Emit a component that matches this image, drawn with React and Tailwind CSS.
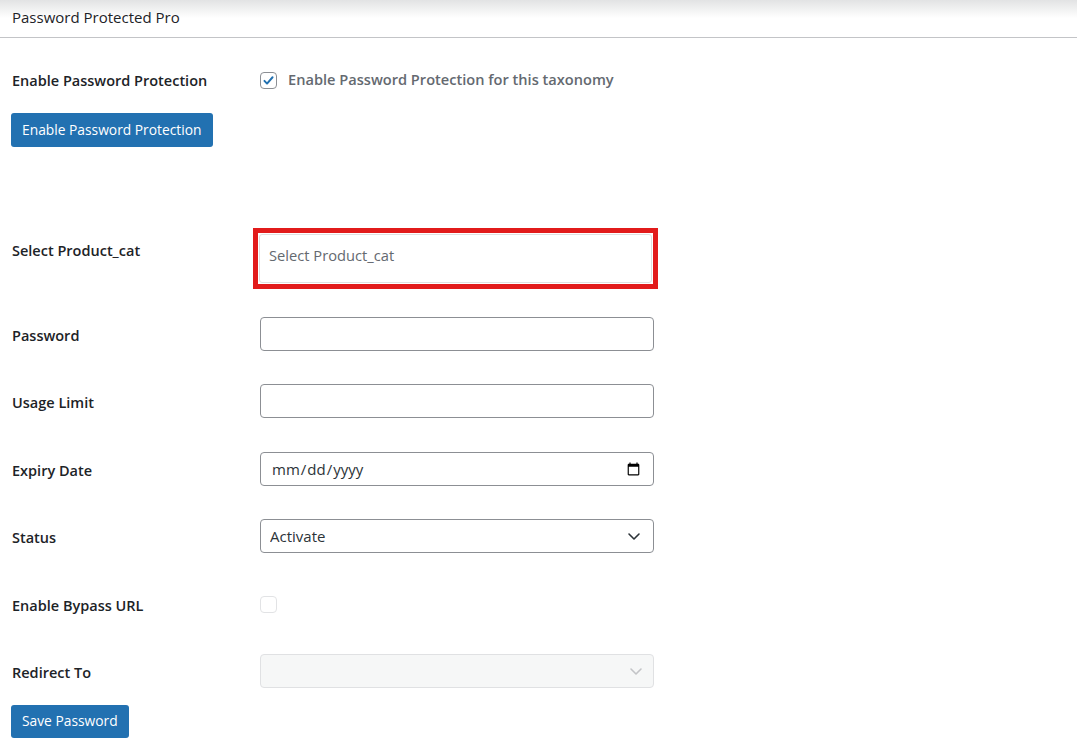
import { useState } from 'react';

const font = { fontFamily: '"Open Sans", "Noto Sans", "Liberation Sans", sans-serif' };

function Chevron({ className }) {
  return (
    <svg className={className} width="16" height="16" viewBox="0 0 16 16" fill="none" stroke="currentColor" strokeWidth="1.6" strokeLinecap="round" strokeLinejoin="round">
      <path d="M3 6l5 5 5-5" />
    </svg>
  );
}

function Row({ label, children, className = '' }) {
  return (
    <div className={`flex items-center h-[34px] ${className}`}>
      <div className="w-[248px] shrink-0 pt-[3px] text-[14.5px] font-semibold text-[#1d2327]">{label}</div>
      {children}
    </div>
  );
}

export default function App() {
  const [enabled, setEnabled] = useState(true);
  const [bypass, setBypass] = useState(false);

  return (
    <div className="min-h-[755px] w-full bg-white" style={font}>
      {/* header bar */}
      <div className="h-[38px] flex items-center pl-3 border-b border-[#c3c4c7] bg-[linear-gradient(to_bottom,#e2e3e4,#ffffff_18px)]">
        <span className="text-[15px] text-[#1d2327] -mt-[2px]">Password Protected Pro</span>
      </div>

      <div className="pl-3">
        {/* enable protection */}
        <div className="flex items-center h-[20px] mt-[32px]">
          <div className="w-[248px] shrink-0 pt-px text-[14.5px] font-semibold text-[#1d2327]">Enable Password Protection</div>
          <button
            onClick={() => setEnabled(!enabled)}
            className="w-[17px] h-[17px] rounded-[4px] border border-[#8c8f94] bg-white flex items-center justify-center"
          >
            {enabled && (
              <svg width="13" height="13" viewBox="0 0 16 16" fill="none" stroke="#2271b1" strokeWidth="2.4" strokeLinecap="round" strokeLinejoin="round">
                <path d="M3 8.5l3.2 3.3L13 4" />
              </svg>
            )}
          </button>
          <span className="ml-[11px] text-[14.6px] font-semibold text-[#646970]">Enable Password Protection for this taxonomy</span>
        </div>

        <button className="mt-[23px] -ml-px h-[34px] px-[11px] rounded-[3px] bg-[#2271b1] text-white text-[13.8px]">
          Enable Password Protection
        </button>

        {/* highlighted select */}
        <div className="flex items-start mt-[81px]">
          <div className="w-[248px] shrink-0 pt-[12px] text-[14.5px] font-semibold text-[#1d2327]">Select Product_cat</div>
          <div className="-ml-[7px] w-[405px] border-[5px] border-[#e21b1b] p-px">
            <div className="h-[49px] rounded-[3px] border border-[#e0e0e0] flex items-start pt-[9px] pl-[9px] text-[14.7px] text-[#646970]">
              Select Product_cat
            </div>
          </div>
        </div>

        <Row label="Password" className="mt-[28px]">
          <input type="password" className="w-[394px] h-[34px] rounded-[4px] border border-[#8c8f94] px-2 outline-none" />
        </Row>

        <Row label="Usage Limit" className="mt-[33px]">
          <input type="number" className="w-[394px] h-[34px] rounded-[4px] border border-[#8c8f94] px-2 outline-none" />
        </Row>

        <Row label="Expiry Date" className="mt-[34px]">
          <input type="date" className="w-[394px] h-[34px] rounded-[4px] border border-[#8c8f94] pl-[10px] pr-[10px] text-[15px] text-[#2c3338] outline-none" />
        </Row>

        <Row label="Status" className="mt-[33px]">
          <div className="relative w-[394px]">
            <select className="appearance-none w-full h-[34px] rounded-[4px] border border-[#8c8f94] bg-white pl-[9px] text-[15px] text-[#2c3338] outline-none">
              <option>Activate</option>
              <option>Deactivate</option>
            </select>
            <Chevron className="absolute right-[12px] top-[9px] text-[#2c3338] pointer-events-none" />
          </div>
        </Row>

        <Row label="Enable Bypass URL" className="mt-[34px]">
          <button
            onClick={() => setBypass(!bypass)}
            className="w-[17px] h-[17px] rounded-[4px] border border-[#e2e3e5] bg-white"
          />
        </Row>

        <Row label="Redirect To" className="mt-[33px]">
          <div className="relative w-[394px]">
            <select disabled className="appearance-none w-full h-[34px] rounded-[4px] border border-[#e0e1e3] bg-[#f6f7f7] outline-none" />
            <Chevron className="absolute right-[10px] top-[9px] text-[#c3c4c7] pointer-events-none" />
          </div>
        </Row>

        <button className="mt-[17px] -ml-px h-[33px] px-[11px] rounded-[3px] bg-[#2271b1] text-white text-[13.8px]">
          Save Password
        </button>
      </div>
    </div>
  );
}
